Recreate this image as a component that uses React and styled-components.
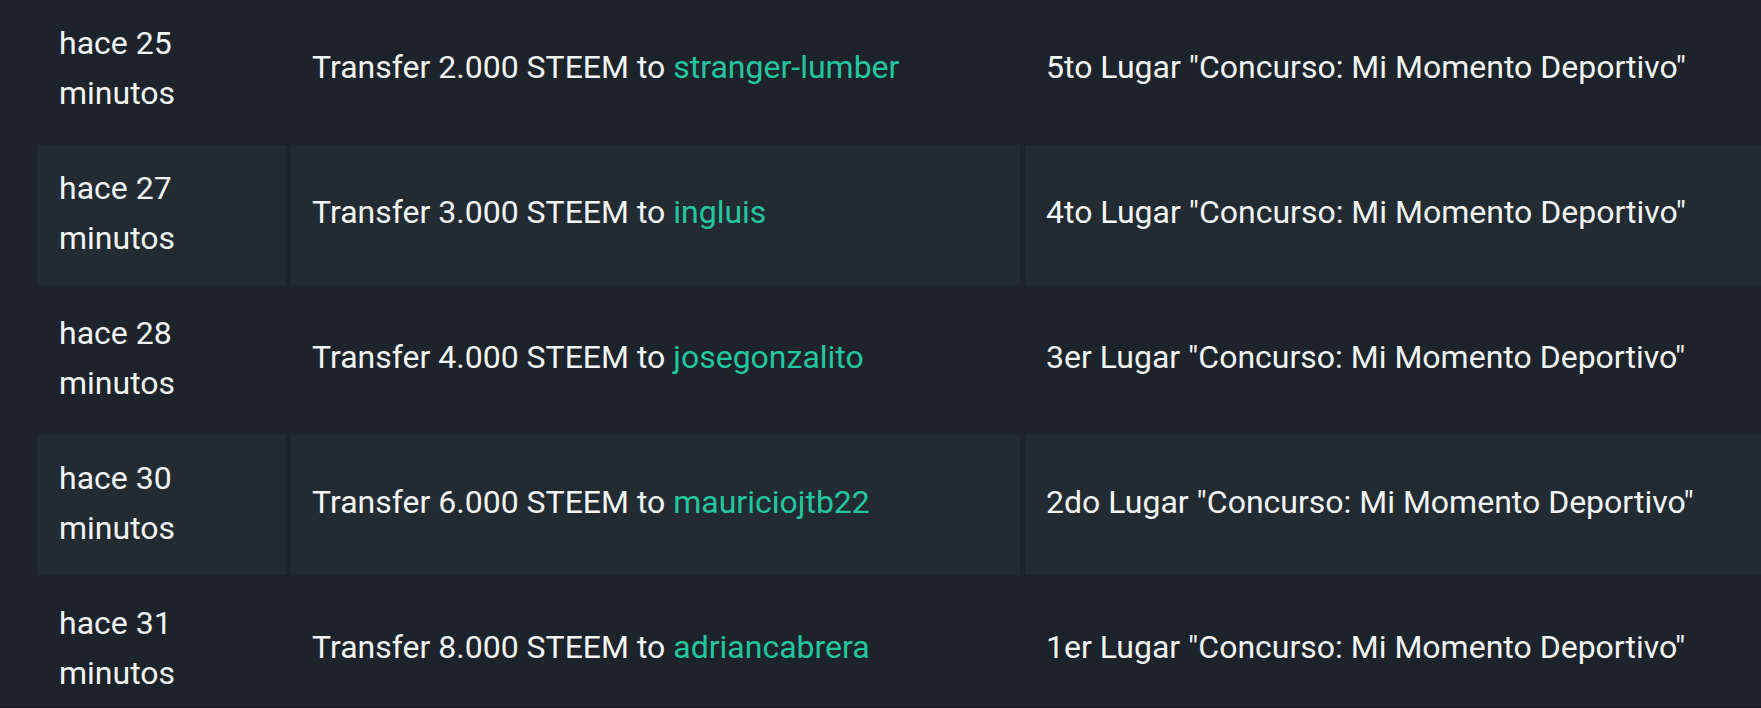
import React from "react";
import styled, { createGlobalStyle } from "styled-components";

const Global = createGlobalStyle`
  html, body { margin: 0; padding: 0; background: #1d232a; overflow: hidden; }
  body { font-family: Roboto, "Liberation Sans", sans-serif; }
`;

const Page = styled.div`
  box-sizing: border-box;
  height: 708px;
  overflow: hidden;
  border-bottom: 1px solid #151a1f;
  padding-left: 37px;
  background: #1d232a;
`;

const Table = styled.div`
  display: grid;
  row-gap: 5px;
`;

const Row = styled.div`
  display: grid;
  grid-template-columns: 249px 729px 1fr;
  column-gap: 5px;
  height: 140px;
`;

const Cell = styled.div`
  display: flex;
  align-items: center;
  padding: 0 22px 4px 21px;
  background: ${(p) => (p.$striped ? "#222b32" : "transparent")};
  color: #f4f5f6;
  font-size: 32px;
  line-height: 49.5px;
  white-space: ${(p) => (p.$nowrap ? "nowrap" : "normal")};
`;

const TimeText = styled.span`
  display: block;
  line-height: 50.5px;
  margin-left: 1px;
`;

const Account = styled.a`
  color: #22c79f;
  text-decoration: none;
`;

const rows = [
  { t: ["hace 25", "minutos"], amt: "2.000", to: "stranger-lumber", memo: '5to Lugar "Concurso: Mi Momento Deportivo"' },
  { t: ["hace 27", "minutos"], amt: "3.000", to: "ingluis", memo: '4to Lugar "Concurso: Mi Momento Deportivo"' },
  { t: ["hace 28", "minutos"], amt: "4.000", to: "josegonzalito", memo: '3er Lugar "Concurso: Mi Momento Deportivo"' },
  { t: ["hace 30", "minutos"], amt: "6.000", to: "mauriciojtb22", memo: '2do Lugar "Concurso: Mi Momento Deportivo"' },
  { t: ["hace 31", "minutos"], amt: "8.000", to: "adriancabrera", memo: '1er Lugar "Concurso: Mi Momento Deportivo"' },
];

export default function App() {
  return (
    <>
      <Global />
      <Page>
        <Table>
          {rows.map((r, i) => {
            const s = i % 2 === 1;
            return (
              <Row key={i}>
                <Cell $striped={s}>
                  <TimeText>
                    {r.t[0]}
                    <br />
                    {r.t[1]}
                  </TimeText>
                </Cell>
                <Cell $striped={s} $nowrap>
                  <span>
                    Transfer {r.amt} STEEM to <Account href="#">{r.to}</Account>
                  </span>
                </Cell>
                <Cell $striped={s} $nowrap>
                  {r.memo}
                </Cell>
              </Row>
            );
          })}
        </Table>
      </Page>
    </>
  );
}
